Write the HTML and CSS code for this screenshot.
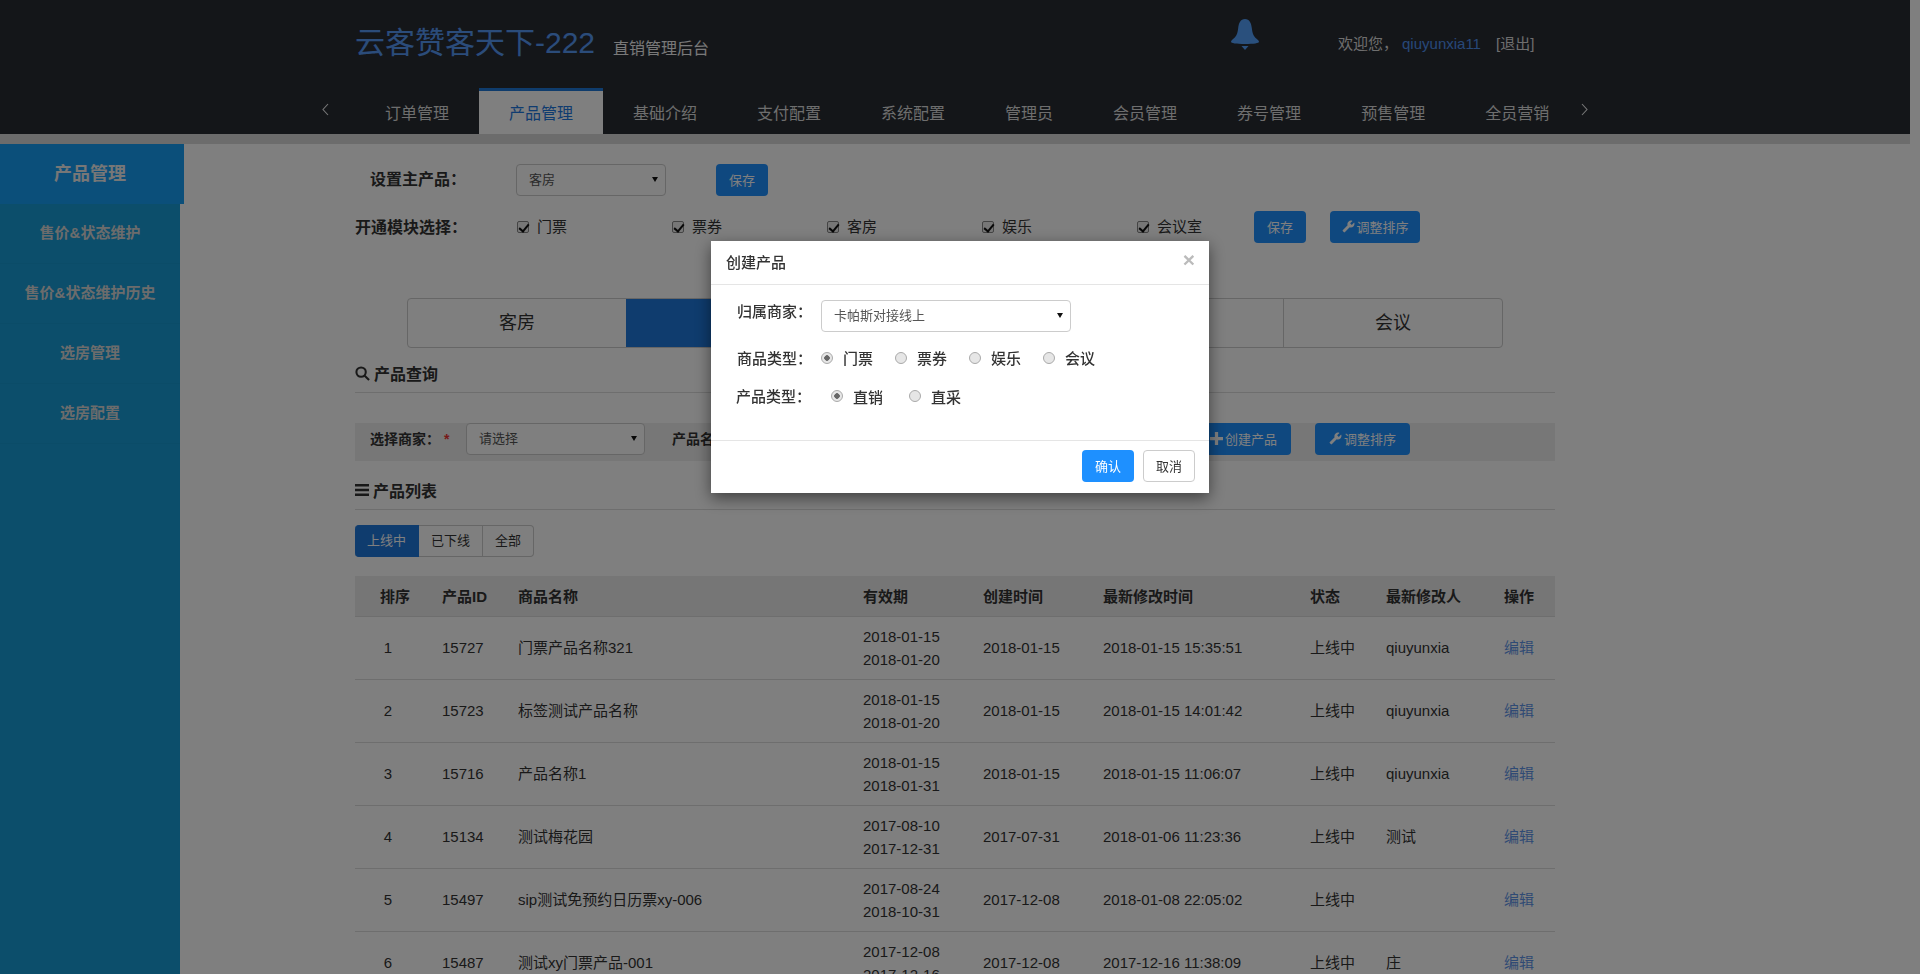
FILE: index.html
```html
<!DOCTYPE html>
<html lang="zh-CN">
<head>
<meta charset="utf-8">
<title>云客赞客天下-222 直销管理后台</title>
<link rel="stylesheet" href="styles.css">
</head>
<body>
<div class="page">
  <header class="header">
    <div class="top">
      <div class="brand"><span class="brand-name">云客赞客天下-222</span><span class="brand-sub">直销管理后台</span></div>
      <svg class="bell" viewBox="0 0 28 31"><path d="M14 0C9.500 0 7.700 4 7.200 9 6.600 15 5 18 1 21 .3 21.600 0 22.300 0 23c0 1 5 2 14 2s14-1 14-2c0-.7-.3-1.400-1-2-4-3-5.600-6-6.200-12C20.300 4 18.500 0 14 0zM10.500 27h7L14 31z"/></svg>
      <div class="welcome">欢迎您，<a class="user">qiuyunxia11</a><a class="logout">[退出]</a></div>
    </div>
    <nav class="nav">
      <svg class="chev chev-left" viewBox="0 0 7 13"><polyline points="6,1 1,6.500 6,12"/></svg>
      <a class="nav-item">订单管理</a>
      <a class="nav-item active">产品管理</a>
      <a class="nav-item">基础介绍</a>
      <a class="nav-item">支付配置</a>
      <a class="nav-item">系统配置</a>
      <a class="nav-item">管理员</a>
      <a class="nav-item">会员管理</a>
      <a class="nav-item">券号管理</a>
      <a class="nav-item">预售管理</a>
      <a class="nav-item">全员营销</a>
      <svg class="chev chev-right" viewBox="0 0 7 13"><polyline points="1,1 6,6.500 1,12"/></svg>
    </nav>
  </header>
  <div class="band"></div>
  <div class="layout">
    <aside class="side">
      <div class="side-head">产品管理</div>
      <a class="side-item">售价&amp;状态维护</a>
      <a class="side-item">售价&amp;状态维护历史</a>
      <a class="side-item">选房管理</a>
      <a class="side-item">选房配置</a>
    </aside>
    <main class="main">
      <div class="row row-main">
        <label class="row-label label-main">设置主产品<span class="colon">：</span></label>
        <div class="select-wrap w150"><select class="select"><option>客房</option></select></div>
        <button class="btn btn-blue save-a">保存</button>
      </div>
      <div class="row row-modules">
        <label class="row-label label-modules">开通模块选择<span class="colon">：</span></label>
        <label class="check"><input type="checkbox" checked><span>门票</span></label>
        <label class="check"><input type="checkbox" checked><span>票券</span></label>
        <label class="check"><input type="checkbox" checked><span>客房</span></label>
        <label class="check"><input type="checkbox" checked><span>娱乐</span></label>
        <label class="check check-last"><input type="checkbox" checked><span>会议室</span></label>
        <button class="btn btn-blue">保存</button>
        <button class="btn btn-blue sort-a">
          <svg class="ico" viewBox="0 0 24 24"><path transform="matrix(-1 0 0 1 24 0)" d="M22.700 19l-9.100-9.100c.9-2.300.4-5-1.500-6.900-2-2-5-2.400-7.400-1.300L9 6 6 9 1.600 4.700C.4 7.100.9 10.100 2.900 12.100c1.900 1.900 4.600 2.400 6.900 1.500l9.100 9.100c.4.4 1 .4 1.400 0l2.300-2.300c.5-.4.5-1.100.1-1.400z"/></svg>调整排序
        </button>
      </div>
      <div class="tabs">
        <a class="tab">客房</a>
        <a class="tab tab-on">门票</a>
        <a class="tab">票券</a>
        <a class="tab">娱乐</a>
        <a class="tab">会议</a>
      </div>
      <h3 class="sec sec-query">
        <svg class="sec-ico" viewBox="0 0 16 16"><circle cx="6.500" cy="6.500" r="5"/><line x1="10.300" y1="10.300" x2="15" y2="15"/></svg>产品查询
      </h3>
      <div class="filter">
        <label class="filter-label">选择商家：<em class="req">*</em></label>
        <div class="select-wrap w179"><select class="select"><option>请选择</option></select></div>
        <label class="filter-name">产品名称：</label>
        <button class="btn btn-blue btn-create">
          <svg class="ico" viewBox="0 0 12 12"><path d="M4.500 0h3v4.500H12v3H7.500V12h-3V7.500H0v-3h4.500z"/></svg>创建产品
        </button>
        <button class="btn btn-blue btn-sort">
          <svg class="ico" viewBox="0 0 24 24"><path transform="matrix(-1 0 0 1 24 0)" d="M22.700 19l-9.100-9.100c.9-2.300.4-5-1.500-6.900-2-2-5-2.400-7.400-1.300L9 6 6 9 1.600 4.700C.4 7.100.9 10.100 2.900 12.100c1.900 1.900 4.600 2.400 6.900 1.500l9.100 9.100c.4.4 1 .4 1.400 0l2.300-2.300c.5-.4.5-1.100.1-1.400z"/></svg>调整排序
        </button>
      </div>
      <h3 class="sec sec-list">
        <svg class="sec-ico-fill" viewBox="0 0 14 12"><path d="M0 0h14v2.400H0zM0 4.800h14v2.400H0zM0 9.600h14V12H0z"/></svg>产品列表
      </h3>
      <div class="group">
        <a class="group-btn group-on">上线中</a><a class="group-btn">已下线</a><a class="group-btn group-last">全部</a>
      </div>
      <table class="table">
        <colgroup>
          <col class="c1"><col class="c2"><col class="c3"><col class="c4"><col class="c5"><col class="c6"><col class="c7"><col class="c8"><col class="c9">
        </colgroup>
        <thead>
          <tr><th class="first">排序</th><th>产品ID</th><th>商品名称</th><th>有效期</th><th>创建时间</th><th>最新修改时间</th><th>状态</th><th>最新修改人</th><th>操作</th></tr>
        </thead>
        <tbody>
          <tr><td class="num">1</td><td>15727</td><td>门票产品名称321</td><td>2018-01-15<br>2018-01-20</td><td>2018-01-15</td><td>2018-01-15 15:35:51</td><td>上线中</td><td>qiuyunxia</td><td><a class="link">编辑</a></td></tr>
          <tr><td class="num">2</td><td>15723</td><td>标签测试产品名称</td><td>2018-01-15<br>2018-01-20</td><td>2018-01-15</td><td>2018-01-15 14:01:42</td><td>上线中</td><td>qiuyunxia</td><td><a class="link">编辑</a></td></tr>
          <tr><td class="num">3</td><td>15716</td><td>产品名称1</td><td>2018-01-15<br>2018-01-31</td><td>2018-01-15</td><td>2018-01-15 11:06:07</td><td>上线中</td><td>qiuyunxia</td><td><a class="link">编辑</a></td></tr>
          <tr><td class="num">4</td><td>15134</td><td>测试梅花园</td><td>2017-08-10<br>2017-12-31</td><td>2017-07-31</td><td>2018-01-06 11:23:36</td><td>上线中</td><td>测试</td><td><a class="link">编辑</a></td></tr>
          <tr><td class="num">5</td><td>15497</td><td>sip测试免预约日历票xy-006</td><td>2017-08-24<br>2018-10-31</td><td>2017-12-08</td><td>2018-01-08 22:05:02</td><td>上线中</td><td></td><td><a class="link">编辑</a></td></tr>
          <tr><td class="num">6</td><td>15487</td><td>测试xy门票产品-001</td><td>2017-12-08<br>2017-12-16</td><td>2017-12-08</td><td>2017-12-16 11:38:09</td><td>上线中</td><td>庄</td><td><a class="link">编辑</a></td></tr>
        </tbody>
      </table>
    </main>
  </div>
</div>

<div class="backdrop"></div>
<section class="modal">
  <div class="modal-head"><span class="modal-title">创建产品</span><span class="close">×</span></div>
  <div class="modal-body">
    <div class="m-row m-row-select">
      <label class="m-label">归属商家<span class="colon">：</span></label>
      <div class="select-wrap w250"><select class="select select-m"><option>卡帕斯对接线上</option></select></div>
    </div>
    <div class="m-row m-row-a">
      <label class="m-label">商品类型<span class="colon">：</span></label>
      <label class="radio"><input type="radio" name="a" checked><span>门票</span></label>
      <label class="radio"><input type="radio" name="a"><span>票券</span></label>
      <label class="radio"><input type="radio" name="a"><span>娱乐</span></label>
      <label class="radio"><input type="radio" name="a"><span>会议</span></label>
    </div>
    <div class="m-row m-row-b">
      <label class="m-label">产品类型<span class="colon">：</span></label>
      <label class="radio radio-wide"><input type="radio" name="b" checked><span>直销</span></label>
      <label class="radio radio-wide"><input type="radio" name="b"><span>直采</span></label>
    </div>
  </div>
  <div class="modal-foot">
    <button class="btn btn-confirm">确认</button>
    <button class="btn btn-cancel">取消</button>
  </div>
</section>
</body>
</html>
```

FILE: styles.css
```css
* { box-sizing: border-box; }
html, body { margin: 0; padding: 0; height: 100%; background: #fff; }
body { overflow: hidden; font-family: "Liberation Sans", "Noto Sans CJK SC", sans-serif; font-size: 15px; color: #333; }
.page { width: 1910px; }

.header { height: 134px; background: #282c33; display: flex; flex-direction: column; }
.top { height: 88px; display: flex; align-items: center; padding-left: 355px; }
.brand { width: 876px; height: 40px; display: flex; align-items: flex-start; }
.brand-name { font-size: 30px; color: #5699f5; line-height: 40px; margin-top: -1px; }
.brand-sub { font-size: 16px; color: #f2f2f2; line-height: 40px; margin: 5px 0 0 18px; }
.bell { width: 28px; height: 31px; fill: #54a0fa; margin-top: -20px; }
.welcome { margin-left: 79px; font-size: 15px; color: #ddd; margin-top: -4px; }
.user { color: #4f90ef; margin-left: 4px; }
.logout { margin-left: 15px; }

.nav { height: 46px; display: flex; padding-left: 322px; }
.chev { width: 7px; height: 13px; fill: none; stroke: #eee; stroke-width: 1.100; margin-top: 15px; }
.chev-left { margin-right: 26px; }
.chev-right { margin-left: 2px; }
.nav-item { padding: 0 30px; font-size: 16px; line-height: 52px; color: #dcdcdc; height: 46px; white-space: nowrap; }
.nav-item.active { background: #fff; color: #1e78e0; border-top: 3px solid #1e78d8; line-height: 46px; }

.band { height: 10px; background: #d8d8d8; }
.layout { display: flex; }

.side { width: 184px; flex: none; min-height: 830px; }
.side-head { height: 60px; padding-right: 4px; background: #169ef5; color: #eee; font-size: 18px; font-weight: 700; text-align: center; line-height: 60px; }
.side-item { display: block; width: 180px; height: 60px; background: #189cd6; color: #d8d8d8; font-size: 15px; font-weight: 700; text-align: center; line-height: 58px; border-bottom: 1px solid #1798d0; }
.side::after { content: ""; display: block; width: 180px; height: 600px; background: #189cd6; }

.main { padding: 20px 0 0 171px; width: 1371px; }

.row { display: flex; align-items: flex-start; height: 32px; }
.row-label { font-size: 16px; font-weight: 700; color: #333; line-height: 30px; height: 32px; white-space: nowrap; }
.colon { font-family: "Noto Sans CJK TC", sans-serif; }
.label-main { padding-left: 15px; width: 161px; line-height: 29px; }
.row-modules { margin-top: 15px; }
.label-modules { width: 162px; }
.save-a { margin-left: 50px; }
.sort-a { margin-left: 24px; padding: 0 0 2px; width: 90px; }

.select-wrap { position: relative; height: 32px; }
.select-wrap::after { content: ""; position: absolute; right: 8px; top: 13px; border-style: solid; border-width: 5px 3px 0; border-color: #111 transparent transparent; }
.w150 { width: 150px; } .w179 { width: 179px; } .w250 { width: 250px; }
.select { appearance: none; -webkit-appearance: none; width: 100%; height: 32px; background: #fff; border: 1px solid #ccc; border-radius: 4px; font: 13px "Liberation Sans", "Noto Sans CJK SC", sans-serif; color: #555; padding: 0 12px 1px; outline: none; }

.btn { height: 32px; padding: 0 12px 2px; border: 1px solid transparent; border-radius: 4px; font: 13px "Liberation Sans", "Noto Sans CJK SC", sans-serif; white-space: nowrap; display: inline-flex; align-items: center; justify-content: center; }
.btn-blue { background: #1e90ff; color: #fff; }
.ico { width: 13px; height: 13px; fill: #fff; margin-right: 2px; flex: none; }

.check { width: 155px; display: flex; align-items: center; height: 32px; font-size: 15px; color: #333; }
.check span { margin-top: -3px; }
.check-last { width: 117px; }
.check input, .radio input { appearance: none; -webkit-appearance: none; margin: 0; flex: none; }
.check input { width: 12px; height: 12px; border: 1px solid #888; border-radius: 2px; background: #eee; margin-right: 8px; position: relative; margin-top: -1px; }
.check input::after { content: ""; position: absolute; left: 3px; top: 0; width: 4px; height: 8px; border: solid #111; border-width: 0 2px 2px 0; transform: rotate(40deg); }

.tabs { display: flex; width: 1096px; height: 50px; margin: 55px 0 0 52px; border: 1px solid #ccc; border-radius: 4px; overflow: hidden; }
.tab { flex: 1; text-align: center; font-size: 18px; line-height: 49px; color: #333; border-left: 1px solid #ccc; }
.tab:first-child { border-left: 0; }
.tab-on { background: #1e78dc; color: #fff; border-left: 0; }

.sec { margin: 0; display: flex; align-items: center; height: 31px; border-bottom: 1px solid #ddd; font-size: 16px; font-weight: 700; color: #333; padding-bottom: 8px; width: 1200px; }
.sec-query { margin-top: 14px; }
.sec-list { margin-top: 18px; }
.sec-ico { width: 15px; height: 15px; fill: none; stroke: #333; stroke-width: 2.200; margin-right: 4px; }
.sec-ico-fill { width: 14px; height: 12px; fill: #333; margin-right: 4px; }

.filter { margin-top: 30px; width: 1200px; height: 38px; background: #eee; display: flex; align-items: flex-start; padding-left: 15px; }
.filter-label { width: 96px; font-size: 14px; font-weight: 700; line-height: 32px; white-space: nowrap; }
.req { font-style: normal; color: #e33; margin-left: 4px; }
.filter-name { margin-left: 27px; font-size: 14px; font-weight: 700; line-height: 32px; width: 70px; white-space: nowrap; }
.btn-create { margin-left: 454px; width: 95px; padding: 0 0 2px; }
.btn-sort { margin-left: 24px; width: 95px; padding: 0 0 2px; }

.group { display: flex; margin-top: 15px; height: 32px; }
.group-btn { width: 64px; height: 32px; border: 1px solid #ccc; border-left: 0; font-size: 13px; line-height: 30px; text-align: center; color: #333; }
.group-on { background: #1e78dc; border-color: #1e78dc; color: #fff; border-radius: 4px 0 0 4px; }
.group-last { width: 51px; border-radius: 0 4px 4px 0; }

.table { margin-top: 19px; width: 1200px; table-layout: fixed; border-collapse: collapse; font-size: 15px; color: #333; }
.c1 { width: 79px; } .c2 { width: 76px; } .c3 { width: 345px; } .c4 { width: 120px; } .c5 { width: 120px; }
.c6 { width: 207px; } .c7 { width: 76px; } .c8 { width: 118px; } .c9 { width: 59px; }
.table th { height: 40px; background: #ececec; border-bottom: 1px solid #ddd; padding: 0 0 0 8px; text-align: left; font-weight: 700; white-space: nowrap; }
.table th.first { padding-left: 25px; }
.table td { height: 63px; padding: 8px 0 8px 8px; line-height: 23px; border-bottom: 1px solid #ddd; white-space: nowrap; }
.table td.num { text-align: center; padding-right: 21px; }
.link { color: #5f95e8; }

.backdrop { position: fixed; inset: 0; background: rgba(0, 0, 0, .5); }
.modal { position: fixed; left: 711px; top: 241px; width: 498px; height: 252px; background: #fff; box-shadow: 0 5px 15px rgba(0, 0, 0, .5); display: flex; flex-direction: column; }
.modal-head { height: 44px; flex: none; border-bottom: 1px solid #e5e5e5; display: flex; justify-content: space-between; padding: 0 15px; align-items: center; }
.modal-title { font-size: 15px; font-weight: 500; color: #333; margin-top: -2px; }
.close { font-size: 21px; font-weight: 700; line-height: 1; color: #bbb; margin-top: -7px; margin-right: -1px; }
.modal-body { flex: 1; padding: 15px 0 0 26px; }
.m-row { display: flex; align-items: center; }
.m-row-select { align-items: flex-start; }
.m-label { width: 84px; flex: none; font-size: 15px; font-weight: 500; color: #333; white-space: nowrap; height: 22px; line-height: 22px; }
.m-row-a { margin-top: 15px; height: 22px; }
.m-row-a .radio span { margin-top: -2px; }
.m-row-b { margin-top: 16px; height: 22px; margin-left: -1px; }
.m-row-b .m-label { width: 95px; }
.m-row-b .radio input { margin-top: 0; }
.radio { width: 74px; display: flex; align-items: center; font-size: 15px; font-weight: 500; color: #333; }
.radio-wide { width: 78px; }
.radio input { width: 12px; height: 12px; border: 1px solid #aaa; border-radius: 50%; background: #e6e6e6; margin-right: 10px; margin-top: -1px; }
.radio input:checked { background: radial-gradient(circle, #666 0 2.500px, #e6e6e6 3px); }
.modal-foot { height: 53px; flex: none; border-top: 1px solid #e5e5e5; display: flex; justify-content: flex-end; padding: 9px 14px 0 0; gap: 9px; }
.btn-confirm { width: 52px; padding: 0 0 2px; background: #1e90ff; color: #fff; }
.btn-cancel { width: 52px; padding: 0 0 2px; background: #fff; color: #333; border-color: #ccc; }
```
